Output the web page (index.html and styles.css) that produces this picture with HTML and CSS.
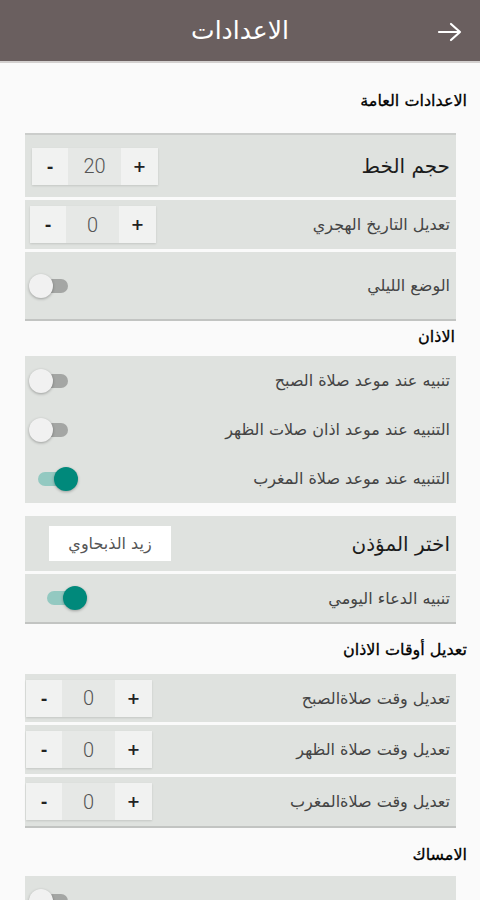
FILE: index.html
```html
<!DOCTYPE html>
<html lang="ar" dir="rtl">
<head>
  <meta charset="utf-8">
  <title>الاعدادات</title>
  <link rel="stylesheet" href="styles.css">
</head>
<body>
  <header class="topbar">
    <button class="back" aria-label="رجوع">
      <svg width="26" height="20" viewBox="0 0 26 20"><path d="M2 10h21M14 2l9 8-9 8" fill="none" stroke="#fff" stroke-width="2.2" stroke-linecap="round" stroke-linejoin="round"/></svg>
    </button>
    <h1 class="title">الاعدادات</h1>
    <span></span>
  </header>

  <h2 class="group-title first">الاعدادات العامة</h2>
  <section class="card card-top card-bottom">
    <div class="row row-big">
      <span class="label label-big">حجم الخط</span>
      <div class="stepper"><button>+</button><span class="val">20</span><button>-</button></div>
    </div>
    <div class="row row-hijri">
      <span class="label">تعديل التاريخ الهجري</span>
      <div class="stepper"><button>+</button><span class="val">0</span><button>-</button></div>
    </div>
    <div class="row row-night">
      <span class="label">الوضع الليلي</span>
      <span class="switch"><span class="track"></span><span class="thumb"></span></span>
    </div>
  </section>

  <h2 class="group-title adhan">الاذان</h2>
  <section class="card card-plain">
    <div class="row row-sw">
      <span class="label">تنبيه عند موعد صلاة الصبح</span>
      <span class="switch"><span class="track"></span><span class="thumb"></span></span>
    </div>
    <div class="row row-sw">
      <span class="label">التنبيه عند موعد اذان صلات الظهر</span>
      <span class="switch"><span class="track"></span><span class="thumb"></span></span>
    </div>
    <div class="row row-sw">
      <span class="label">التنبيه عند موعد صلاة المغرب</span>
      <span class="switch on"><span class="track"></span><span class="thumb"></span></span>
    </div>
  </section>

  <section class="card card-bottom card-muezzin">
    <div class="row row-muezzin">
      <span class="label label-big">اختر المؤذن</span>
      <span class="picker">زيد الذبحاوي</span>
    </div>
    <div class="row row-dua">
      <span class="label">تنبيه الدعاء اليومي</span>
      <span class="switch on"><span class="track"></span><span class="thumb"></span></span>
    </div>
  </section>

  <h2 class="group-title times">تعديل أوقات الاذان</h2>
  <section class="card card-bottom card-times">
    <div class="row row-time">
      <span class="label">تعديل وقت صلاةالصبح</span>
      <div class="stepper"><button>+</button><span class="val">0</span><button>-</button></div>
    </div>
    <div class="row row-time">
      <span class="label">تعديل وقت صلاة الظهر</span>
      <div class="stepper"><button>+</button><span class="val">0</span><button>-</button></div>
    </div>
    <div class="row row-time">
      <span class="label">تعديل وقت صلاةالمغرب</span>
      <div class="stepper"><button>+</button><span class="val">0</span><button>-</button></div>
    </div>
  </section>

  <h2 class="group-title imsak">الامساك</h2>
  <section class="card card-plain">
    <div class="row row-sw">
      <span class="label"></span>
      <span class="switch"><span class="track"></span><span class="thumb"></span></span>
    </div>
  </section>
</body>
</html>
```

FILE: styles.css
```css
html { background:#fafafa; }

body
{
  margin:0;
  font-family:"DejaVu Sans", sans-serif;
  color:#333;
  direction:rtl;
}

/* top bar */
.topbar
{
  display:grid;
  grid-template-columns:60px 1fr 60px;
  align-items:center;
  height:61px;
  background:#6a5f5f;
  border-bottom:2px solid #d3d0cf;
}
.back
{
  display:flex;
  justify-content:center;
  align-items:center;
  background:none;
  border:none;
  padding:0;
  margin-top:3px;
}
.title
{
  margin:0;
  text-align:center;
  color:#fff;
  font-size:25px;
  font-weight:normal;
}

/* group headings */
.group-title
{
  margin:0;
  padding:0 13px 0 0;
  height:20px;
  line-height:20px;
  font-size:16px;
  font-weight:normal;
  color:#000;
  -webkit-text-stroke:0.3px #000;
}
.group-title.first { margin:28px 0 22px; }
.group-title.adhan { margin:6px 0 9px; padding-right:25px; }
.group-title.times { margin:16px 0 14px; }
.group-title.imsak { margin:17px 0 11px; }

/* cards */
.card
{
  margin:0 24px 0 25px;
  display:flex;
  flex-direction:column;
  gap:3px;
}
.card-top { border-top:2px solid #cbcdcb; }
.card-bottom { border-bottom:2px solid #c2c4c2; }
.card-plain { gap:0; background:#dfe2df; }
.card-muezzin { margin-top:13px; }

.row
{
  display:flex;
  align-items:center;
  justify-content:space-between;
  background:#dfe2df;
  padding:0 6px 0 7px;
}
.row-big { height:62px; }
.row-hijri { height:49px; padding-left:5px; }
.row-night { height:67px; padding-left:4px; }
.row-sw { height:49px; padding-left:4px; }
.row-muezzin { height:55px; padding-left:24px; }
.row-dua { height:48px; padding-left:13px; }
.row-time { height:49px; padding-left:1px; }
.card-times .row:first-child { height:48px; }

.label
{
  font-size:16px;
  color:#444;
}
.label-big
{
  font-size:20px;
  color:#1c1c1c;
}

/* stepper */
.stepper
{
  display:flex;
  height:37px;
  box-shadow:0 1px 2px rgba(0,0,0,0.12);
}
.stepper button
{
  width:37px;
  border:none;
  padding:0;
  background:#f1f2f1;
  font-family:"DejaVu Sans", sans-serif;
  font-size:16px;
  font-weight:bold;
  color:#222;
}
.stepper button:last-child { width:36px; }
.stepper .val
{
  width:53px;
  display:flex;
  align-items:center;
  justify-content:center;
  background:#e6e8e6;
  font-family:Roboto, sans-serif;
  font-weight:300;
  font-size:20px;
  color:#555;
}

/* switch */
.switch
{
  position:relative;
  width:49px;
  height:24px;
}
.switch .track
{
  position:absolute;
  left:9px;
  right:10px;
  top:5px;
  height:14px;
  border-radius:7px;
  background:#a4a6a4;
}
.switch .thumb
{
  position:absolute;
  left:0;
  top:0;
  width:24px;
  height:24px;
  border-radius:50%;
  background:#f1f1f1;
  box-shadow:0 1px 3px rgba(0,0,0,0.3);
}
.switch.on .track { background:#93c9c1; }
.switch.on .thumb
{
  left:auto;
  right:0;
  background:#00897b;
}

/* muezzin picker */
.picker
{
  width:122px;
  height:35px;
  display:flex;
  align-items:center;
  justify-content:center;
  background:#fff;
  font-size:16px;
  color:#555;
}
```
